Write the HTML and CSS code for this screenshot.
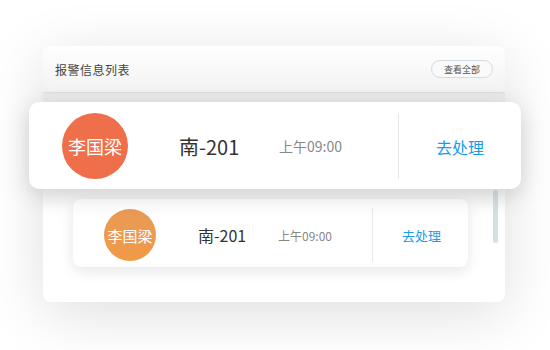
FILE: index.html
```html
<!DOCTYPE html>
<html lang="zh">
<head>
    <meta charset="UTF-8">
    <title>报警信息列表</title>
    <link rel="stylesheet" href="styles.css">
</head>
<body>
    <div class="panel">
        <div class="panel-head">
            <span class="panel-title">报警信息列表</span>
            <button class="view-all">查看全部</button>
        </div>
        <div class="alarm-list">
            <div class="alarm-item small">
                <div class="avatar">李国梁</div>
                <div class="room">南-201</div>
                <div class="time">上午09:00</div>
                <div class="divider"></div>
                <div class="action">去处理</div>
            </div>
            <div class="scrollbar"></div>
        </div>
        <div class="alarm-item big">
            <div class="avatar">李国梁</div>
            <div class="room">南-201</div>
            <div class="time">上午09:00</div>
            <div class="divider"></div>
            <div class="action">去处理</div>
        </div>
    </div>
</body>
</html>
```
FILE: styles.css
```css
body {
    margin: 0;
    padding: 46px 0 0 43px;
    background: #fff;
    font-family: "Noto Sans CJK SC", "Noto Sans", sans-serif;
    color: #333;
    height: 350px;
    box-sizing: border-box;
    overflow: hidden;
}
.panel {
    position: relative;
    width: 462px;
    height: 256px;
    background: #fff;
    border-radius: 8px;
    box-shadow: 0 12px 60px rgba(0, 0, 0, 0.13);
}
.panel-head {
    height: 46px;
    display: flex;
    align-items: center;
    justify-content: space-between;
    padding: 0 12px;
    border-bottom: 1px solid #e0e0e0;
    border-radius: 8px 8px 0 0;
    background: linear-gradient(180deg, #fff, #f2f2f2);
}
.panel-title {
    font-size: 12px;
    color: #444;
    letter-spacing: 0.5px;
}
.view-all {
    width: 62px;
    height: 18px;
    padding: 0;
    font-family: inherit;
    font-size: 9px;
    color: #555;
    background: #fafafa;
    border: 1px solid #d3dce2;
    border-radius: 9px;
}
.alarm-list {
    position: relative;
    box-sizing: border-box;
    height: 209px;
    padding: 106px 0 0 30px;
    background: linear-gradient(180deg, #e9e9e9 0, #ececec 9px, #f7f7f7 100px, #fff 120px);
    border-radius: 0 0 8px 8px;
}
.scrollbar {
    position: absolute;
    right: 7px;
    top: 97px;
    width: 5px;
    height: 53px;
    border-radius: 3px;
    background: #d6dfe4;
}
.alarm-item {
    display: flex;
    align-items: center;
    background: #fff;
    box-sizing: border-box;
}
.alarm-item .avatar {
    flex: none;
    border-radius: 50%;
    color: #fff;
    display: flex;
    align-items: center;
    justify-content: center;
}
.alarm-item .divider {
    flex: none;
    align-self: stretch;
    width: 1px;
    background: #e4e9ec;
}
.alarm-item .action {
    flex: 1;
    text-align: center;
    color: #1a9be8;
}
.alarm-item .time {
    color: #888;
}
.small {
    width: 395px;
    height: 68px;
    padding: 9px 0 5px 31px;
    border-radius: 8px;
    box-shadow: 0 4px 14px rgba(0, 0, 0, 0.1);
}
.small .avatar {
    width: 52px;
    height: 52px;
    font-size: 15px;
    background: linear-gradient(180deg, #e99a55, #f19a47);
}
.small .room {
    margin-left: 42px;
    width: 80px;
    font-size: 16px;
}
.small .time {
    width: 94px;
    font-size: 12px;
}
.small .action {
    font-size: 13px;
    padding-left: 2px;
}
.big {
    position: absolute;
    left: -14px;
    top: 56px;
    width: 492px;
    height: 87px;
    padding: 11px 0 10px 33px;
    border-radius: 10px;
    box-shadow: 0 6px 24px rgba(0, 0, 0, 0.16);
}
.big .avatar {
    width: 66px;
    height: 66px;
    font-size: 18px;
    background: #ef6f4b;
}
.big .room {
    margin-left: 51px;
    width: 100px;
    font-size: 20px;
}
.big .time {
    width: 119px;
    font-size: 14px;
}
.big .action {
    font-size: 16px;
    padding-top: 2px;
}
```
